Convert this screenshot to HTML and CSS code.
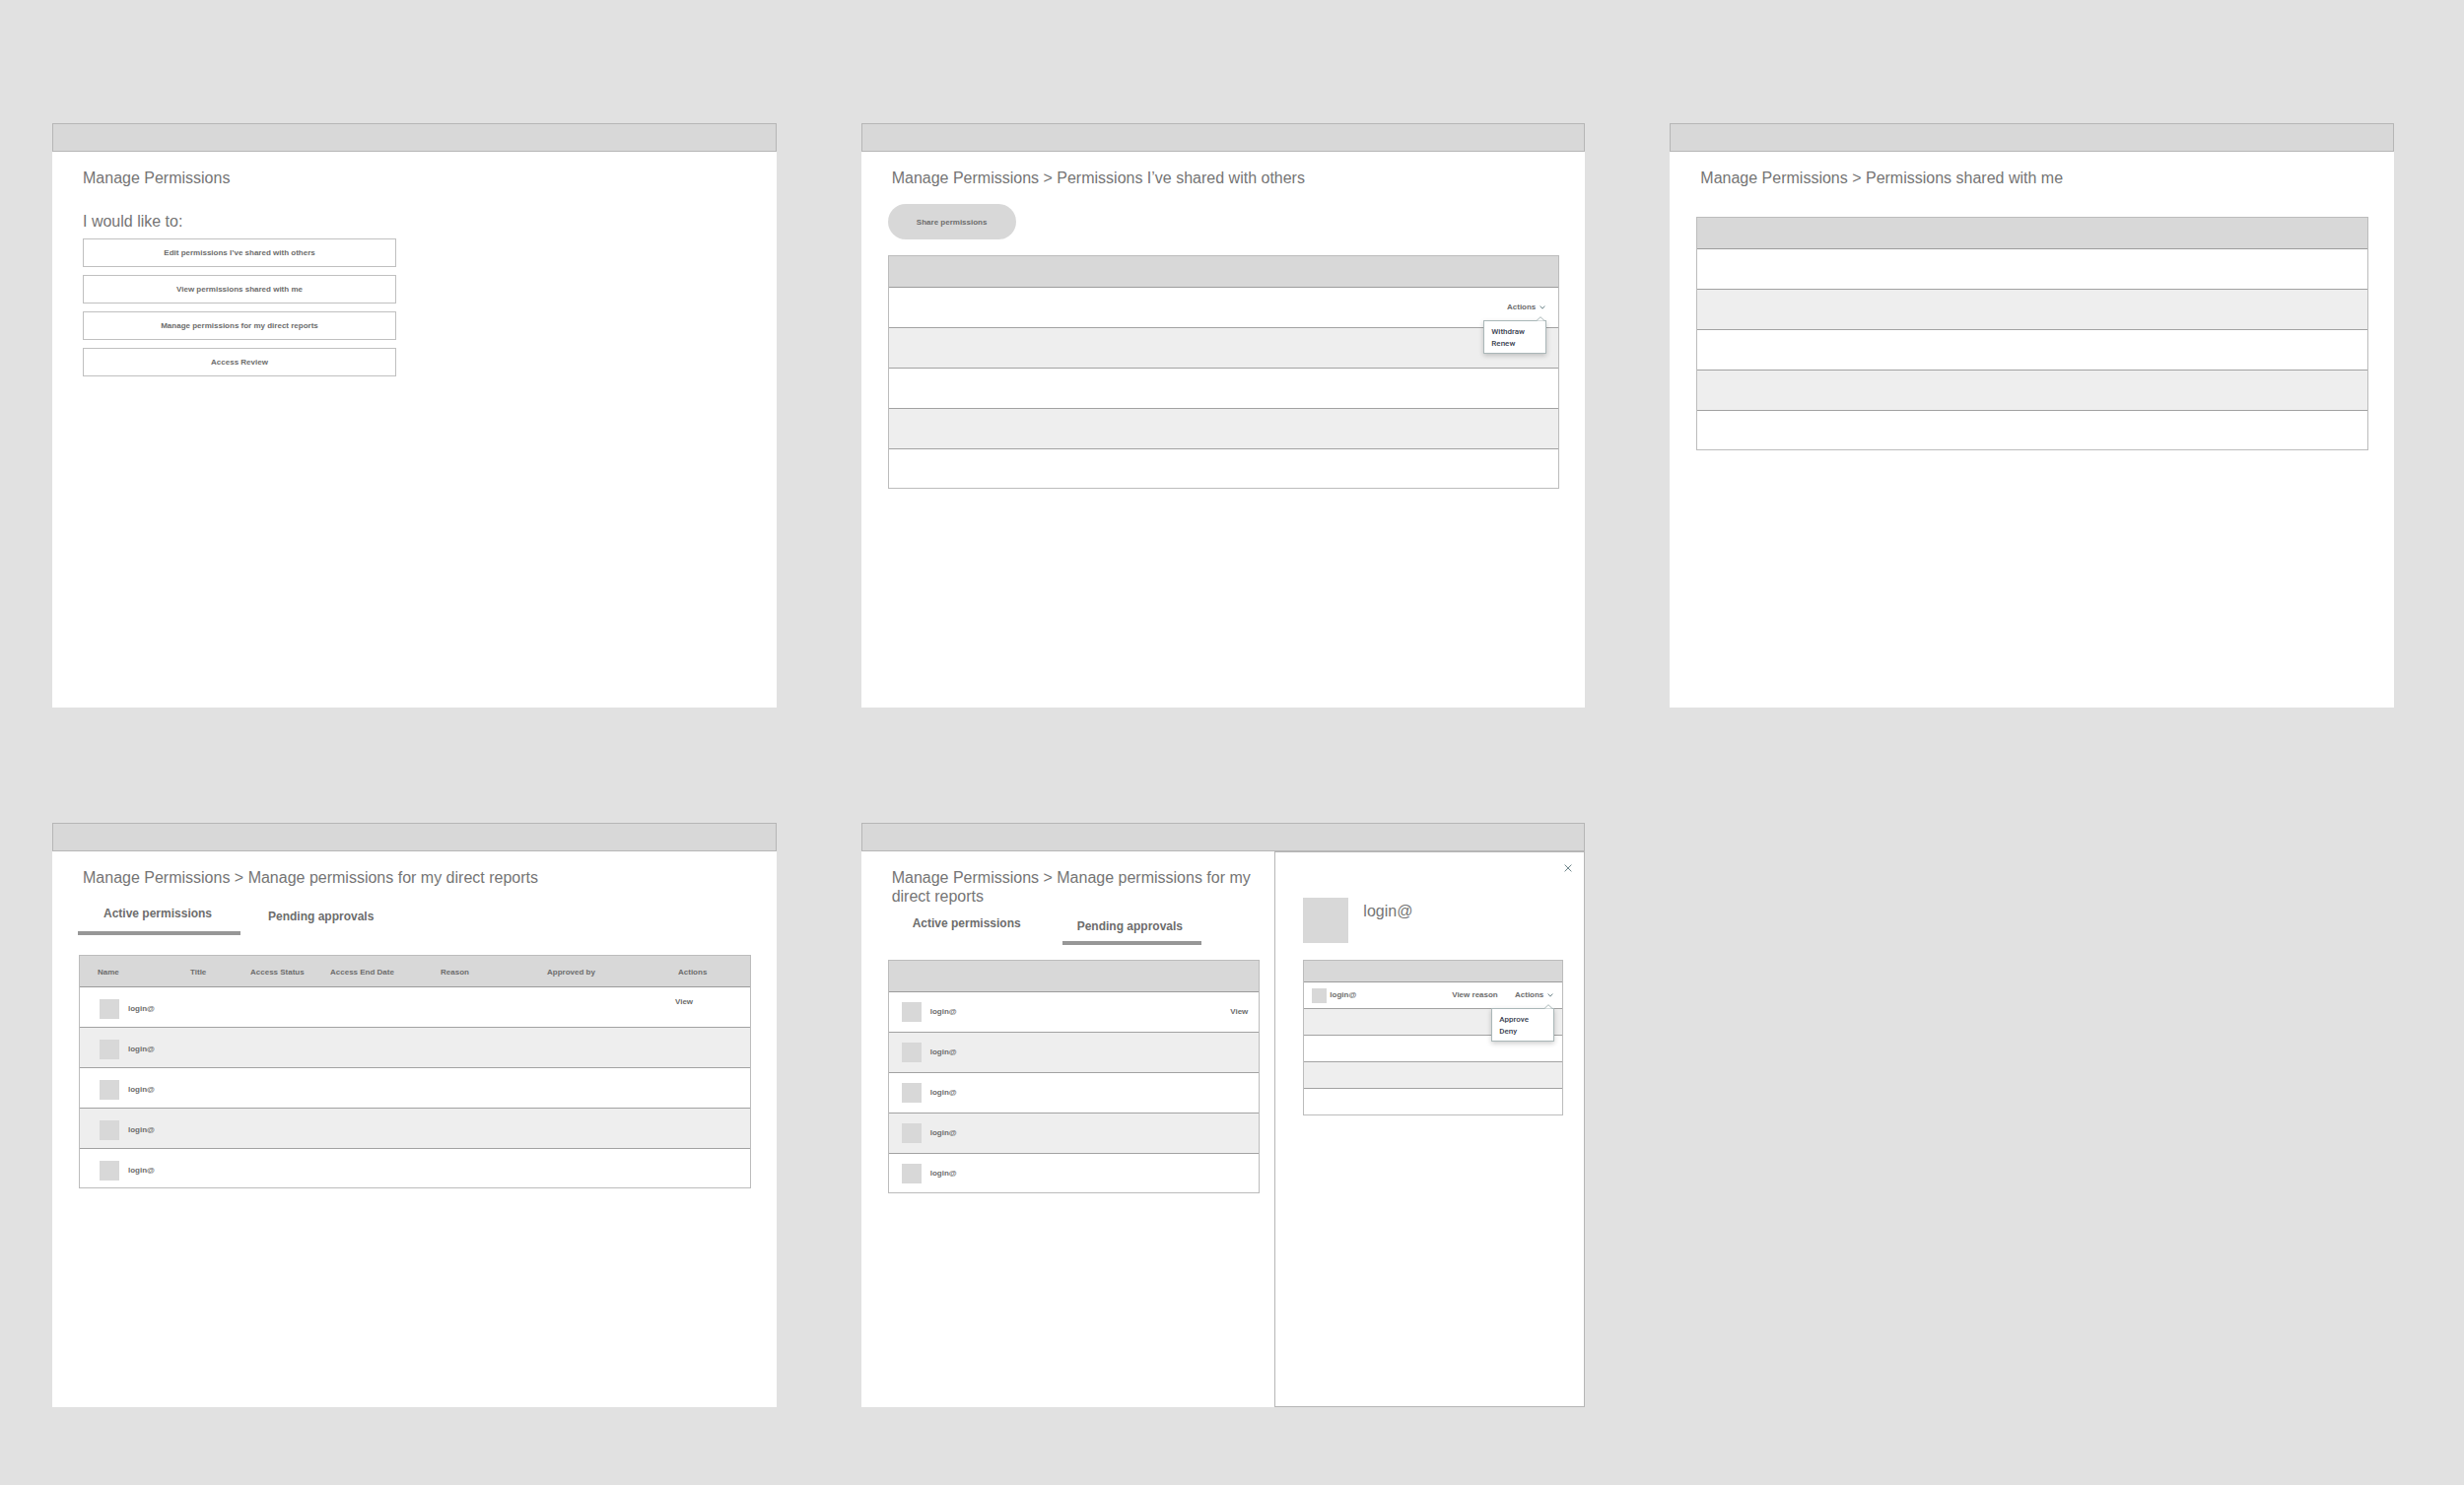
FILE: index.html
```html
<!DOCTYPE html>
<html lang="en">
<head>
<meta charset="utf-8">
<title>Manage Permissions</title>
<link rel="stylesheet" href="styles.css">
</head>
<body>
<div class="board">

  <!-- start page -->
  <section class="screen">
    <div class="topbar"></div>
    <div class="content">
      <h2 class="title">Manage Permissions</h2>
      <h3 class="subtitle">I would like to:</h3>
      <div class="choices">
        <button type="button">Edit permissions I’ve shared with others</button>
        <button type="button">View permissions shared with me</button>
        <button type="button">Manage permissions for my direct reports</button>
        <button type="button">Access Review</button>
      </div>
    </div>
  </section>

  <!-- shared with others -->
  <section class="screen">
    <div class="topbar"></div>
    <div class="content">
      <h2 class="title">Manage Permissions &gt; Permissions I’ve shared with others</h2>
      <button type="button" class="share">Share permissions</button>
      <table class="list">
        <thead>
          <tr><th></th></tr>
        </thead>
        <tbody>
          <tr>
            <td class="right">
              <div class="dropdown">
                <button type="button" class="toggle">Actions
                  <svg class="chevron" viewBox="0 0 6 4"><path d="M0.6 0.6L3 3.2L5.4 0.6"/></svg>
                </button>
                <div class="menu">
                  <svg class="arrow" viewBox="0 0 8 5"><path d="M0 4.5L4 0.7L8 4.5"/></svg>
                  <button type="button">Withdraw</button>
                  <button type="button">Renew</button>
                </div>
              </div>
            </td>
          </tr>
          <tr><td></td></tr>
          <tr><td></td></tr>
          <tr><td></td></tr>
          <tr><td></td></tr>
        </tbody>
      </table>
    </div>
  </section>

  <!-- shared with me -->
  <section class="screen">
    <div class="topbar"></div>
    <div class="content">
      <h2 class="title">Manage Permissions &gt; Permissions shared with me</h2>
      <table class="list received">
        <thead>
          <tr><th></th></tr>
        </thead>
        <tbody>
          <tr><td></td></tr>
          <tr><td></td></tr>
          <tr><td></td></tr>
          <tr><td></td></tr>
          <tr><td></td></tr>
        </tbody>
      </table>
    </div>
  </section>

  <!-- direct reports, active tab -->
  <section class="screen">
    <div class="topbar"></div>
    <div class="content">
      <h2 class="title">Manage Permissions &gt; Manage permissions for my direct reports</h2>
      <div class="tabs">
        <button type="button" class="tab tab-active current">Active permissions</button>
        <button type="button" class="tab tab-pending">Pending approvals</button>
      </div>
      <table class="list reports">
        <colgroup>
          <col class="c-name"><col class="c-title"><col class="c-status"><col class="c-end"><col class="c-reason"><col class="c-by"><col>
        </colgroup>
        <thead>
          <tr>
            <th>Name</th>
            <th>Title</th>
            <th>Access Status</th>
            <th>Access End Date</th>
            <th>Reason</th>
            <th>Approved by</th>
            <th>Actions</th>
          </tr>
        </thead>
        <tbody>
          <tr>
            <td colspan="6"><div class="user"><span class="avatar"></span>login@</div></td>
            <td class="view"><a href="#">View</a></td>
          </tr>
          <tr><td colspan="7"><div class="user"><span class="avatar"></span>login@</div></td></tr>
          <tr><td colspan="7"><div class="user"><span class="avatar"></span>login@</div></td></tr>
          <tr><td colspan="7"><div class="user"><span class="avatar"></span>login@</div></td></tr>
          <tr><td colspan="7"><div class="user"><span class="avatar"></span>login@</div></td></tr>
        </tbody>
      </table>
    </div>
  </section>

  <!-- direct reports, pending tab with side panel -->
  <section class="screen">
    <div class="topbar"></div>
    <div class="split">
      <div class="content narrow">
        <h2 class="title">Manage Permissions &gt; Manage permissions for my direct reports</h2>
        <div class="tabs">
          <button type="button" class="tab tab-active">Active permissions</button>
          <button type="button" class="tab tab-pending current">Pending approvals</button>
        </div>
        <table class="list pending">
          <thead>
            <tr><th colspan="2"></th></tr>
          </thead>
          <tbody>
            <tr>
              <td><div class="user"><span class="avatar"></span>login@</div></td>
              <td class="right"><a href="#">View</a></td>
            </tr>
            <tr><td colspan="2"><div class="user"><span class="avatar"></span>login@</div></td></tr>
            <tr><td colspan="2"><div class="user"><span class="avatar"></span>login@</div></td></tr>
            <tr><td colspan="2"><div class="user"><span class="avatar"></span>login@</div></td></tr>
            <tr><td colspan="2"><div class="user"><span class="avatar"></span>login@</div></td></tr>
          </tbody>
        </table>
      </div>
      <aside class="panel">
        <button type="button" class="close" aria-label="Close">
          <svg viewBox="0 0 8 8"><path d="M0.6 0.6L7.4 7.4M7.4 0.6L0.6 7.4"/></svg>
        </button>
        <div class="person">
          <span class="photo"></span>
          <h2>login@</h2>
        </div>
        <table class="list small">
          <thead>
            <tr><th colspan="2"></th></tr>
          </thead>
          <tbody>
            <tr>
              <td><div class="user"><span class="avatar"></span>login@</div></td>
              <td class="right">
                <a href="#" class="reason">View reason</a>
                <div class="dropdown">
                  <button type="button" class="toggle">Actions
                    <svg class="chevron" viewBox="0 0 6 4"><path d="M0.6 0.6L3 3.2L5.4 0.6"/></svg>
                  </button>
                  <div class="menu">
                    <svg class="arrow" viewBox="0 0 8 5"><path d="M0 4.5L4 0.7L8 4.5"/></svg>
                    <button type="button">Approve</button>
                    <button type="button">Deny</button>
                  </div>
                </div>
              </td>
            </tr>
            <tr><td colspan="2"></td></tr>
            <tr><td colspan="2"></td></tr>
            <tr><td colspan="2"></td></tr>
            <tr><td colspan="2"></td></tr>
          </tbody>
        </table>
      </aside>
    </div>
  </section>

</div>
</body>
</html>
```
FILE: styles.css
```css
*{
  margin: 0;
  padding: 0;
  box-sizing: border-box;
}
body{
  background-color: #e1e1e1;
  color: #6d6d6d;
  font: bold 8px/12px "Liberation Sans", Arial, sans-serif;
}
button{
  border: 0;
  background: none;
  color: inherit;
  font: inherit;
}
a{
  color: inherit;
  text-decoration: none;
}
svg{
  display: block;
  fill: none;
  stroke: #6f868b;
  stroke-width: 1;
}

.board{
  display: grid;
  grid-template-columns: repeat(3, 1fr);
  gap: 117px 86px;
  padding: 125px 71px 80px 53px;
}
.screen{
  display: flex;
  flex-direction: column;
  min-height: 593px;
  background-color: #fff;
}
.topbar{
  height: 29px;
  background-color: #d8d8d8;
  border: 1px solid #b6b6b6;
}
.content{
  padding: 17px 26px 0 27px;
}
.title, .subtitle, .person h2{
  font-weight: normal;
  font-size: 16px;
  line-height: 19px;
  color: #757575;
}
.title{
  padding-left: 4px;
}
.subtitle{
  margin-top: 25px;
  padding-left: 4px;
}

/* start page */
.choices{
  display: flex;
  flex-direction: column;
  gap: 8px;
  width: 322px;
  max-width: 100%;
  margin-top: 8px;
  padding-left: 4px;
}
.choices button{
  height: 29px;
  border: 1px solid #c0c0c0;
}
.share{
  display: block;
  width: 130px;
  height: 36px;
  margin: 17px 0 16px;
  padding-top: 2px;
  border-radius: 18px;
  background-color: #d8d8d8;
}

/* tables */
.list{
  width: 100%;
  border: 1px solid #bcbcbc;
  border-spacing: 0;
}
.list th{
  height: 32px;
  background-color: #d8d8d8;
  border-bottom: 1px solid #9c9c9c;
  text-align: left;
}
.list td{
  height: 41px;
  border-bottom: 1px solid #a2a2a2;
}
.list tr:nth-child(even) td{
  background-color: #eee;
}
.list tbody tr:last-child td{
  height: 39px;
  border-bottom: 0;
}
.list .right{
  padding-right: 13px;
  text-align: right;
}
.received{
  margin-top: 30px;
}
.user{
  display: flex;
  align-items: center;
  gap: 9px;
}
.avatar{
  width: 20px;
  height: 20px;
  background-color: #d8d8d8;
}

.reports{
  margin-top: 20px;
  table-layout: fixed;
}
.reports th{
  padding: 2px 0 0 18px;
}
.reports .user{
  padding: 4px 0 0 20px;
}
.reports .view{
  padding: 9px 0 0 15px;
  vertical-align: top;
}
.c-name{ width: 94px; }
.c-title{ width: 61px; }
.c-status{ width: 81px; }
.c-end{ width: 112px; }
.c-reason{ width: 108px; }
.c-by{ width: 133px; }

/* tabs */
.tabs{
  display: flex;
  align-items: flex-end;
  gap: 13px;
  margin: 20px 0 0 -1px;
}
.tab{
  border-bottom: 4px solid transparent;
  font-size: 12px;
  line-height: 14px;
  text-align: left;
}
.tab-active{
  width: 165px;
  padding: 0 0 11px 26px;
}
.tab-pending{
  width: 141px;
  padding: 0 0 8px 15px;
}
.current{
  border-bottom-color: #979797;
}

/* dropdown */
.dropdown{
  display: inline-block;
  position: relative;
}
.toggle{
  display: flex;
  align-items: center;
  gap: 4px;
}
.chevron{
  width: 6px;
  height: 4px;
}
.menu{
  position: absolute;
  top: 19px;
  right: -1px;
  z-index: 1;
  width: 64px;
  padding: 5px 7px 3px;
  background-color: #fff;
  border: 1px solid #aab7b8;
  box-shadow: 0 2px 5px rgba(0,0,0,.2);
  color: #37404f;
  font-family: Roboto, sans-serif;
  font-weight: 500;
}
.menu button{
  display: block;
}
.arrow{
  position: absolute;
  top: -5px;
  right: 1px;
  width: 8px;
  height: 5px;
  fill: #fff;
  stroke: #aab7b8;
}

/* side panel */
.split{
  display: flex;
  flex: 1;
}
.narrow{
  flex: 1;
  padding-right: 15px;
}
.narrow .title{
  margin-right: -10px;
}
.narrow .tabs{
  margin-top: 11px;
}
.pending{
  margin-top: 15px;
}
.pending .user{
  padding-left: 13px;
}
.list.pending .right{
  padding-right: 11px;
}
.panel{
  flex: none;
  width: 315px;
  padding: 12px 21px 0 28px;
  border: 1px solid #b6b6b6;
}
.close{
  display: block;
  margin: 0 -9px 0 auto;
}
.close svg{
  width: 8px;
  height: 8px;
}
.person{
  display: flex;
  gap: 15px;
  margin: 26px 0 17px;
}
.person h2{
  margin-top: 4px;
}
.photo{
  width: 46px;
  height: 46px;
  background-color: #d8d8d8;
}
.small th{
  height: 22px;
}
.small td{
  height: 27px;
}
.list.small tbody tr:last-child td{
  height: 26px;
}
.small .user{
  gap: 3px;
  padding-left: 8px;
}
.small .avatar{
  width: 15px;
  height: 15px;
}
.list.small .right{
  padding-right: 9px;
}
.reason{
  margin-right: 15px;
}
```
